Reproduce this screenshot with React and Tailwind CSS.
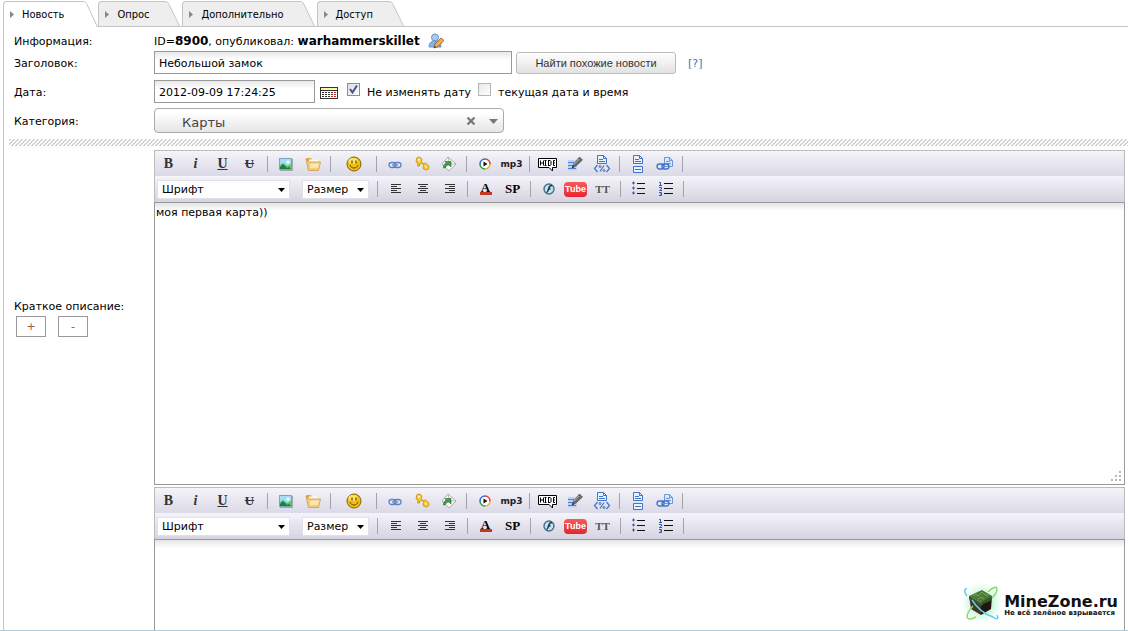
import { useState } from 'react'

const tabs = ['Новость', 'Опрос', 'Дополнительно', 'Доступ']

const Svg = ({ w = 16, h = 16, children }) => (
  <svg width={w} height={h} viewBox={`0 0 ${w} ${h}`} fill="none" aria-hidden="true">
    {children}
  </svg>
)

const serif = "font-['Liberation_Serif',serif] font-bold"

const ImageIcon = () => (
  <Svg>
    <rect x="1.5" y="2.5" width="12" height="11" fill="#a5dcf5" stroke="#7ba6bd" />
    <path d="M2 9l3-2 4 3 4-2v5H2z" fill="#5cc553" />
    <path d="M2 11l3-3 4 4 2-1 2 2H2z" fill="#17804a" />
    <circle cx="10" cy="6" r="1.500" fill="#fff" />
    <path d="M14.500 3v11.500H2" stroke="#a5a5ad" />
  </Svg>
)

const FolderIcon = () => (
  <Svg>
    <path d="M1 2h5l1 2h6v9H3z" fill="#e0a94f" />
    <path d="M4 3.500h9v8H4z" fill="#fff8e4" />
    <path d="M4 6h11.500l-2 8.500H3.500L1 3z" fill="#f2cc80" stroke="#c8923e" strokeWidth=".7" />
    <path d="M5.500 7.500h9L13 12H5z" fill="#fbe6ae" />
  </Svg>
)

const SmileIcon = () => (
  <Svg>
    <circle cx="8" cy="8" r="7" fill="#f2bf14" stroke="#806008" />
    <ellipse cx="7" cy="5" rx="4.500" ry="3" fill="#ffe45e" />
    <path d="M6 4.500v3M10 4.500v3" stroke="#5e4300" strokeWidth="1.200" />
    <path d="M4 9c1 4 7 4 8 0" stroke="#5e4300" />
  </Svg>
)

const LinkIcon = () => (
  <Svg>
    <rect x="2" y="6.500" width="7" height="5" rx="2.500" stroke="#5a86c6" strokeWidth="1.300" />
    <rect x="7" y="6.500" width="7" height="5" rx="2.500" stroke="#5a86c6" strokeWidth="1.300" />
    <path d="M5 9h6" stroke="#fff" />
    <path d="M5 8.500h6M5 9.700h6" stroke="#3767ac" strokeWidth=".6" />
  </Svg>
)

const KeyIcon = () => (
  <Svg>
    <path
      d="M3 1.500l3-.5 2 2-.5 2.500 2 2 2-.5 3 2.500.5 3-2.500 1.500-3-1-.5-2.500 1-1.500-2-1.500-2.500.5v2H3.500L4 7 2 6z"
      fill="#f9c930"
      stroke="#c48a12"
      strokeWidth=".8"
    />
    <circle cx="5" cy="3.800" r="1.100" fill="#fff6cc" />
    <path d="M11 10l2 1.500" stroke="#fff0a0" strokeWidth="1.200" />
  </Svg>
)

const MailIcon = () => (
  <Svg>
    <path d="M7 1l8 7-7 7-7-7z" fill="#fafafa" stroke="#9a9a9a" strokeWidth=".8" />
    <path d="M7 1l1.500 7H15" stroke="#aaa" strokeWidth=".8" />
    <path d="M2.500 12c0-3 1-4.500 3-5L4 5.500h6v5.500L8 9c-2 0-3 1-4 3z" fill="#46994b" stroke="#236b2c" strokeWidth=".6" />
  </Svg>
)

const PlayIcon = () => (
  <Svg>
    <path d="M8 3a5 5 0 0 1 5 5" stroke="#e33b2e" strokeWidth="1.600" />
    <path d="M13 8a5 5 0 0 1-5 5" stroke="#e8b21a" strokeWidth="1.600" />
    <path d="M8 13a5 5 0 0 1-5-5" stroke="#2f9e41" strokeWidth="1.600" />
    <path d="M3 8a5 5 0 0 1 5-5" stroke="#3d6ad6" strokeWidth="1.600" />
    <circle cx="8" cy="8" r="4" fill="#fff" />
    <path d="M6.500 5.500v5L10.500 8z" fill="#111" />
  </Svg>
)

const HideIcon = () => (
  <Svg w={21} h={16}>
    <path d="M1.500 2.500h18v9h-4v3.500l-3.500-3.500H1.500z" fill="#fff" stroke="#000" strokeLinejoin="round" />
    <path
      d="M3.500 4.500v5M6.500 4.500v5M4 7h2M8.500 5v4M7.500 4.500h2M7.500 9.500h2M11.500 4v6M12 4.500h1.500M12 9.500h1.500M14 5v4M18 4.500h-1.500v5H18M16.500 7h1.500"
      stroke="#000"
    />
  </Svg>
)

const PencilIcon = () => (
  <Svg>
    <rect x="1" y="4" width="9" height="10.500" fill="#bcd3f7" />
    <path d="M1 6.500h6M1 9.500h5M1 12.500h8" stroke="#4e7fd0" />
    <path d="M12.500 1l3 3L9 10l-4 2 1.500-4z" fill="#6b6b6b" stroke="#444" strokeWidth=".6" />
    <path d="M12 3l-5 5.500" stroke="#b5b5b5" />
    <path d="M5 12l2-.8L6 10z" fill="#111" />
  </Svg>
)

const CodeIcon = () => (
  <Svg w={18} h={18}>
    <path d="M4.500.5h6l3 3v5h-9z" fill="#e9f1fd" stroke="#3f74c8" />
    <path d="M10.500.5v3h3M6 4.500h4M6 6.500h6" stroke="#3f74c8" />
    <path d="M4.500 10l-3 3.500 3 3.500M13.500 10l3 3.500-3 3.500M11 10.500l-4 6" stroke="#3f74c8" strokeWidth="1.200" />
    <circle cx="7" cy="11.500" r="1" stroke="#3f74c8" />
    <circle cx="11" cy="15.500" r="1" stroke="#3f74c8" />
  </Svg>
)

const PageBreakIcon = () => (
  <Svg w={14} h={18}>
    <path d="M2.500.5h6l3 3v5h-9z" fill="#e9f1fd" stroke="#3f74c8" />
    <path d="M8.500.5v3h3M4 4.500h4M4 6.500h6" stroke="#3f74c8" />
    <path d="M2.500 11.500h9v6h-9z" fill="#e9f1fd" stroke="#3f74c8" />
    <path d="M4 14.500h6" stroke="#3f74c8" />
  </Svg>
)

const PageLinkIcon = () => (
  <Svg w={18} h={16}>
    <path d="M8.500 1.500h5l3 3v6h-8z" fill="#dbe8fb" stroke="#6c97da" />
    <path d="M13.500 1.500v3h3M10 5.500h4M10 7.500h5" stroke="#6c97da" />
    <rect x="1" y="8" width="7" height="5" rx="2.500" stroke="#3f74c8" strokeWidth="1.300" />
    <rect x="6" y="8" width="7" height="5" rx="2.500" stroke="#3f74c8" strokeWidth="1.300" />
  </Svg>
)

const AlignLeft = () => (
  <Svg>
    <path d="M3 3.500h10M3 5.500h6M3 7.500h10M3 9.500h6M3 11.500h10" stroke="#333" />
  </Svg>
)

const AlignCenter = () => (
  <Svg>
    <path d="M3 3.500h10M5 5.500h6M3 7.500h10M5 9.500h6M3 11.500h10" stroke="#333" />
  </Svg>
)

const AlignRight = () => (
  <Svg>
    <path d="M3 3.500h10M7 5.500h6M3 7.500h10M7 9.500h6M3 11.500h10" stroke="#333" />
  </Svg>
)

const FlashIcon = () => (
  <Svg>
    <circle cx="8" cy="8" r="5" fill="#c6e1ec" stroke="#44708a" strokeWidth="1.400" />
    <path d="M11 4.500c-3 0-3 2.500-3.500 3.500S7 11.500 5.500 11.500M7 8h2.500" stroke="#173b52" strokeWidth="1.500" />
  </Svg>
)

const BulletIcon = () => (
  <Svg>
    <path d="M6 2.500h8M6 7.500h8M6 12.500h8" stroke="#111" />
    <path d="M1 2h3M2.500.5v3M1 7h3M2.500 5.500v3M1 12h3M2.500 10.500v3" stroke="#2d5ca8" />
  </Svg>
)

const NumberIcon = () => (
  <Svg>
    <path d="M6 2.500h9M6 7.500h9M6 12.500h9" stroke="#111" />
    <path d="M1 1.500h1.500v3M1 4.500h3M1 6.500h2.500v1.500l-2 1.500h2.500M1 11.500h2.500v3H1M2 13h1.500" stroke="#2d5ca8" />
  </Svg>
)

const rowOne = [
  { id: 'bold', icon: <span className={`${serif} text-sm text-[#333]`}>B</span> },
  { id: 'italic', icon: <span className={`${serif} text-sm text-[#333] italic`}>i</span> },
  { id: 'underline', icon: <span className={`${serif} text-sm text-[#333] underline`}>U</span> },
  { id: 'strike', icon: <span className={`${serif} text-[13px] text-[#333] line-through`}>U</span> },
  null,
  { id: 'image', icon: <ImageIcon /> },
  { id: 'upload', icon: <FolderIcon /> },
  null,
  { id: 'smile', icon: <SmileIcon />, wide: true },
  null,
  { id: 'link', icon: <LinkIcon /> },
  { id: 'leech', icon: <KeyIcon /> },
  { id: 'email', icon: <MailIcon /> },
  null,
  { id: 'video', icon: <PlayIcon /> },
  { id: 'audio', icon: <span className="text-[9px] font-bold text-[#222]">mp3</span> },
  null,
  { id: 'hide', icon: <HideIcon /> },
  { id: 'quote', icon: <PencilIcon /> },
  { id: 'code', icon: <CodeIcon /> },
  null,
  { id: 'pagebreak', icon: <PageBreakIcon /> },
  { id: 'pagelink', icon: <PageLinkIcon /> },
  null,
]

const rowTwo = [
  null,
  { id: 'left', icon: <AlignLeft /> },
  { id: 'center', icon: <AlignCenter /> },
  { id: 'right', icon: <AlignRight /> },
  null,
  {
    id: 'color',
    icon: (
      <span className={`${serif} h-3 w-3 border-b-[3px] border-[#c5381c] text-center text-[13px] leading-[9px] text-black`}>
        A
      </span>
    ),
  },
  { id: 'spoiler', icon: <span className={`${serif} text-[13px] text-black`}>SP</span> },
  null,
  { id: 'flash', icon: <FlashIcon /> },
  {
    id: 'youtube',
    icon: (
      <span className="flex h-[15px] w-[23px] items-center justify-center rounded bg-linear-to-b from-[#f8595c] to-[#e3242b] font-['Liberation_Sans',sans-serif] text-[9px] font-bold text-white">
        Tube
      </span>
    ),
  },
  { id: 'typograph', icon: <span className={`${serif} text-[11px] text-[#555]`}>TT</span> },
  null,
  { id: 'ul', icon: <BulletIcon /> },
  { id: 'ol', icon: <NumberIcon /> },
  null,
]

const ToolItems = ({ items }) =>
  items.map((item, i) =>
    item ? (
      <button
        key={item.id}
        type="button"
        aria-label={item.id}
        className={`flex h-6 shrink-0 items-center justify-center ${item.wide ? 'w-[37px]' : 'w-[27px]'}`}
      >
        {item.icon}
      </button>
    ) : (
      <span key={i} className="flex h-4 w-[9px] shrink-0 justify-center">
        <span className="w-px bg-[#a3a3ab]" />
      </span>
    )
  )

const ToolSelect = ({ label, className }) => (
  <div className={`relative h-[19px] shrink-0 ${className}`}>
    <select
      aria-label={label}
      className="h-full w-full appearance-none border border-[#e0e0ea] bg-white pt-0.5 pl-1 text-black outline-none"
    >
      <option>{label}</option>
    </select>
    <svg width="7" height="4" viewBox="0 0 7 4" className="pointer-events-none absolute top-2 right-[5px]" aria-hidden="true">
      <path d="M0 0h7L3.500 4z" fill="#000" />
    </svg>
  </div>
)

const Editor = ({ label, value, last }) => (
  <div className={`flex flex-col ${last ? 'min-h-0 grow' : ''}`}>
    <div className="border border-b-0 border-[#bbb]">
      <div className="flex h-[25px] items-center bg-linear-to-b from-[#f5f4fa] to-[#dad9e6]">
        <ToolItems items={rowOne} />
      </div>
      <div className="flex h-[26px] items-center bg-linear-to-b from-[#f5f4fa] to-[#d4d3e0] pl-0.5">
        <ToolSelect label="Шрифт" className="mr-3 w-[133px]" />
        <ToolSelect label="Размер" className="mr-1 w-[67px]" />
        <ToolItems items={rowTwo} />
      </div>
    </div>
    <div className={`relative flex ${last ? 'min-h-0 grow' : 'h-[283px]'}`}>
      <textarea
        aria-label={label}
        defaultValue={value}
        className={`w-full resize-none border border-[#999] bg-linear-to-b from-[#e4e4e4] to-white to-[8px] px-px py-[3px] text-black outline-none ${last ? 'border-b-0' : ''}`}
      />
      {!last && (
        <svg width="10" height="10" viewBox="0 0 10 10" className="absolute right-1 bottom-1" aria-hidden="true">
          <path d="M8 0h2v2H8zM4 4h2v2H4zM8 4h2v2H8zM0 8h2v2H0zM4 8h2v2H4zM8 8h2v2H8z" fill="#b5b5b5" />
        </svg>
      )}
    </div>
  </div>
)

const Tab = ({ title, active, onClick }) => (
  <button
    type="button"
    role="tab"
    aria-selected={active}
    onClick={onClick}
    className={`flex items-stretch ${active ? '-mb-px h-[26px]' : 'mr-0.5 h-[25px]'}`}
  >
    <span
      className={`flex items-center rounded-tl border-t border-l border-[#c4c4c4] pl-1.5 ${active ? 'bg-white pr-[19px]' : 'bg-[#eee] pt-px pr-4'}`}
    >
      <svg width="4" height="7" viewBox="0 0 4 7" className="mr-2" aria-hidden="true">
        <path d="M0 0l4 3.500L0 7z" fill="#8c8a7c" />
      </svg>
      {title}
    </span>
    <svg width="15" height="100%" viewBox="0 0 15 26" preserveAspectRatio="none" aria-hidden="true">
      <path d="M0 .5c2 0 3 1 4 3L14.500 26H0z" fill={active ? '#fff' : '#eee'} />
      <path d="M0 .5c2 0 3 1 4 3L14.500 26" fill="none" stroke="#c4c4c4" />
    </svg>
  </button>
)

const Logo = () => (
  <div className="absolute right-2.5 bottom-1 flex items-center">
    <svg width="44" height="46" viewBox="0 0 44 46" aria-hidden="true">
      <defs>
        <radialGradient id="glow">
          <stop offset=".3" stopColor="#7deaa8" stopOpacity=".7" />
          <stop offset="1" stopColor="#d5fbe6" stopOpacity="0" />
        </radialGradient>
      </defs>
      <circle cx="22" cy="23" r="22" fill="url(#glow)" />
      <path d="M9 16l13-6 10 6-10 7z" fill="#4d7a36" />
      <path d="M9 16l12 7v12L11 29z" fill="#4a3426" />
      <path d="M21 23l11-7-1 13-10 6z" fill="#1f1612" />
      <path d="M9 16l12 7v3l-3-1-2-3-2 1-5-4zM21 23l11-7v4l-4 2-3 1-4 3z" fill="#355c28" />
      <path d="M13 16l3-2 2 2 4-4 3 3 3 0M18 19l3-2 3 2" stroke="#7aa758" fill="none" />
      <g fill="none" strokeWidth="1.500">
        <path d="M7 9c-3-1-3 3 0 7M33 37c4 3 6 2 4-2M12 20c5 8 12 14 21 17" stroke="#68c8ee" />
        <path d="M28 12c5-5 9-6 9-3 0 2-2 6-5 9M16 37c-6 3-11 3-8-4 2-4 4-6 5-7" stroke="#86dc6e" />
      </g>
    </svg>
    <div className="pt-1 font-bold whitespace-nowrap text-[#111]">
      <div className="text-base leading-4">MineZone.ru</div>
      <div className="text-[7px] leading-[7px]">Не всё зелёное взрывается</div>
    </div>
  </div>
)

const checkbox = 'h-[13px] w-[13px] appearance-none border border-[#8e8f8f] bg-linear-to-br from-[#dcdcdc] to-white'
const field = 'h-[23px] border border-[#999] bg-linear-to-b from-[#e8e8e8] to-white to-[8px] px-1 pt-0.5 text-black outline-none'
const row = 'grid grid-cols-[140px_1fr] items-center'

const App = () => {
  const [activeTab, setActiveTab] = useState('Новость')
  const [keepDate, setKeepDate] = useState(true)

  return (
    <div className="relative flex h-screen flex-col overflow-hidden border-b border-[#b4c8d6] bg-white pl-[3px] font-['DejaVu_Sans',sans-serif] text-[11px] leading-[14px] text-black">
      <nav
        role="tablist"
        className="flex shrink-0 border-b border-[#c4c4c4] pt-px font-['DejaVu_Sans_Condensed','DejaVu_Sans',sans-serif]"
      >
        {tabs.map((title) => (
          <Tab key={title} title={title} active={title === activeTab} onClick={() => setActiveTab(title)} />
        ))}
      </nav>

      <main className="flex min-h-0 grow flex-col border-l border-[#c4c4c4]">
        <div className="flex flex-col pl-2.5">
          <div className={`${row} h-6 pt-1`}>
            <span className="pt-0.5">Информация:</span>
            <div className="flex items-center">
              <span>
                ID=<b className="text-xs leading-[14px]">8900</b>, опубликовал:{' '}
                <b className="text-xs leading-[14px]">warhammerskillet</b>
              </span>
              <button type="button" aria-label="Редактировать пользователя" className="ml-2">
                <Svg>
                  <circle cx="7" cy="4.500" r="3.500" fill="#a9c9f2" stroke="#6a93cc" />
                  <path d="M1 14c0-4 2-6 6-6s6 2 6 6z" fill="#86b0e8" stroke="#6a93cc" />
                  <path d="M13 5l3 2.500-6 6-4 1.500 1-4z" fill="#eeb04c" stroke="#7d5518" strokeWidth=".8" />
                  <path d="M6 15l.5-2 1.500 1.500z" fill="#333" />
                </Svg>
              </button>
            </div>
          </div>

          <div className={row}>
            <label htmlFor="title" className="pt-0.5">
              Заголовок:
            </label>
            <div className="flex items-center">
              <input id="title" type="text" defaultValue="Небольшой замок" className={`${field} w-[358px]`} />
              <button
                type="button"
                className="ml-1 h-[22px] w-40 rounded-[3px] border border-[#bbb] bg-linear-to-b from-white to-[#e2e2e2] font-['Liberation_Sans',sans-serif] text-[#333]"
              >
                Найти похожие новости
              </button>
              <a href="#help" className="ml-3 pt-0.5 text-[#3a7cb4]">
                [?]
              </a>
            </div>
          </div>

          <div className={`${row} mt-1.5`}>
            <label htmlFor="date" className="pt-0.5">
              Дата:
            </label>
            <div className="flex items-center">
              <input id="date" type="text" defaultValue="2012-09-09 17:24:25" className={`${field} w-[161px]`} />
              <button type="button" aria-label="Календарь" className="mx-[5px] pt-0.5">
                <svg width="18" height="12" viewBox="0 0 18 12" aria-hidden="true">
                  <path d="M0 0h18v12H0z" fill="#333" />
                  <path d="M1 1h16v2H1z" fill="#fbf7a8" />
                  <path d="M1 4h16v7H1z" fill="#fff" />
                  <path d="M2 5.500h14M2 7.500h14M2 9.500h11" stroke="#333" strokeDasharray="2 1" />
                  <path d="M14 5.500h2M14 7.500h2M11 9.500h5" stroke="#e02020" strokeDasharray="2 1" />
                </svg>
              </button>
              <span className="relative mr-[7px] ml-1 flex pb-1">
                <input
                  id="keep"
                  type="checkbox"
                  checked={keepDate}
                  onChange={(e) => setKeepDate(e.target.checked)}
                  className={checkbox}
                />
                {keepDate && (
                  <svg width="9" height="9" viewBox="0 0 9 9" className="pointer-events-none absolute top-0.5 left-0.5" aria-hidden="true">
                    <path d="M1 4l2.500 3.500L8 .5" stroke="#3f5594" strokeWidth="2" fill="none" />
                  </svg>
                )}
              </span>
              <label htmlFor="keep" className="pt-0.5">
                Не изменять дату
              </label>
              <span className="mr-[7px] ml-[7px] flex pb-1">
                <input id="now" type="checkbox" className={`${checkbox} border-[#b5b5b5] from-[#e8e8e8]`} />
              </span>
              <label htmlFor="now" className="pt-0.5">
                текущая дата и время
              </label>
            </div>
          </div>

          <div className={`${row} mt-[5px]`}>
            <label htmlFor="category" className="pt-0.5">
              Категория:
            </label>
            <div className="relative h-[25px] w-[350px]">
              <select
                id="category"
                className="h-full w-full appearance-none rounded border border-[#aaa] bg-linear-to-b from-white from-20% via-[#f4f4f4] via-50% to-[#e6e6e6] pt-1 pl-[27px] text-[13px] text-[#444] outline-none"
              >
                <option>Карты</option>
              </select>
              <button type="button" aria-label="Очистить" className="absolute top-[9px] right-7">
                <svg width="10" height="8" viewBox="0 0 10 8" className="block">
                  <path d="M1.500.5l7 7M8.500.5l-7 7" stroke="#777" strokeWidth="2.200" />
                </svg>
              </button>
              <svg width="9" height="5" viewBox="0 0 9 5" className="pointer-events-none absolute top-[11px] right-1.5" aria-hidden="true">
                <path d="M0 0h9L4.500 5z" fill="#777" />
              </svg>
            </div>
          </div>
        </div>

        <div className="mt-1.5 mb-1 ml-[5px] h-[7px] shrink-0 bg-[linear-gradient(135deg,#d0d0d0_25%,#fff_25%,#fff_50%,#d0d0d0_50%,#d0d0d0_75%,#fff_75%)] bg-size-[4px_4px]" />

        <div className="grid shrink-0 grid-cols-[140px_1fr] items-center pr-[3px] pl-2.5">
          <div className="pt-0.5">
            <span>Краткое описание:</span>
            <div className="mt-0.5 ml-0.5 flex gap-3">
              <button type="button" className="h-[21px] w-[30px] border border-[#999] text-[#a5592c]">
                +
              </button>
              <button type="button" className="h-[21px] w-[30px] border border-[#999] text-[#666]">
                -
              </button>
            </div>
          </div>
          <Editor label="Краткое описание" value="моя первая карта))" />
        </div>

        <div className="mt-0.5 grid min-h-0 grow grid-cols-[140px_1fr] pr-[3px] pl-2.5">
          <div />
          <Editor label="Полное описание" value="" last />
        </div>
      </main>

      <Logo />
    </div>
  )
}

export default App
